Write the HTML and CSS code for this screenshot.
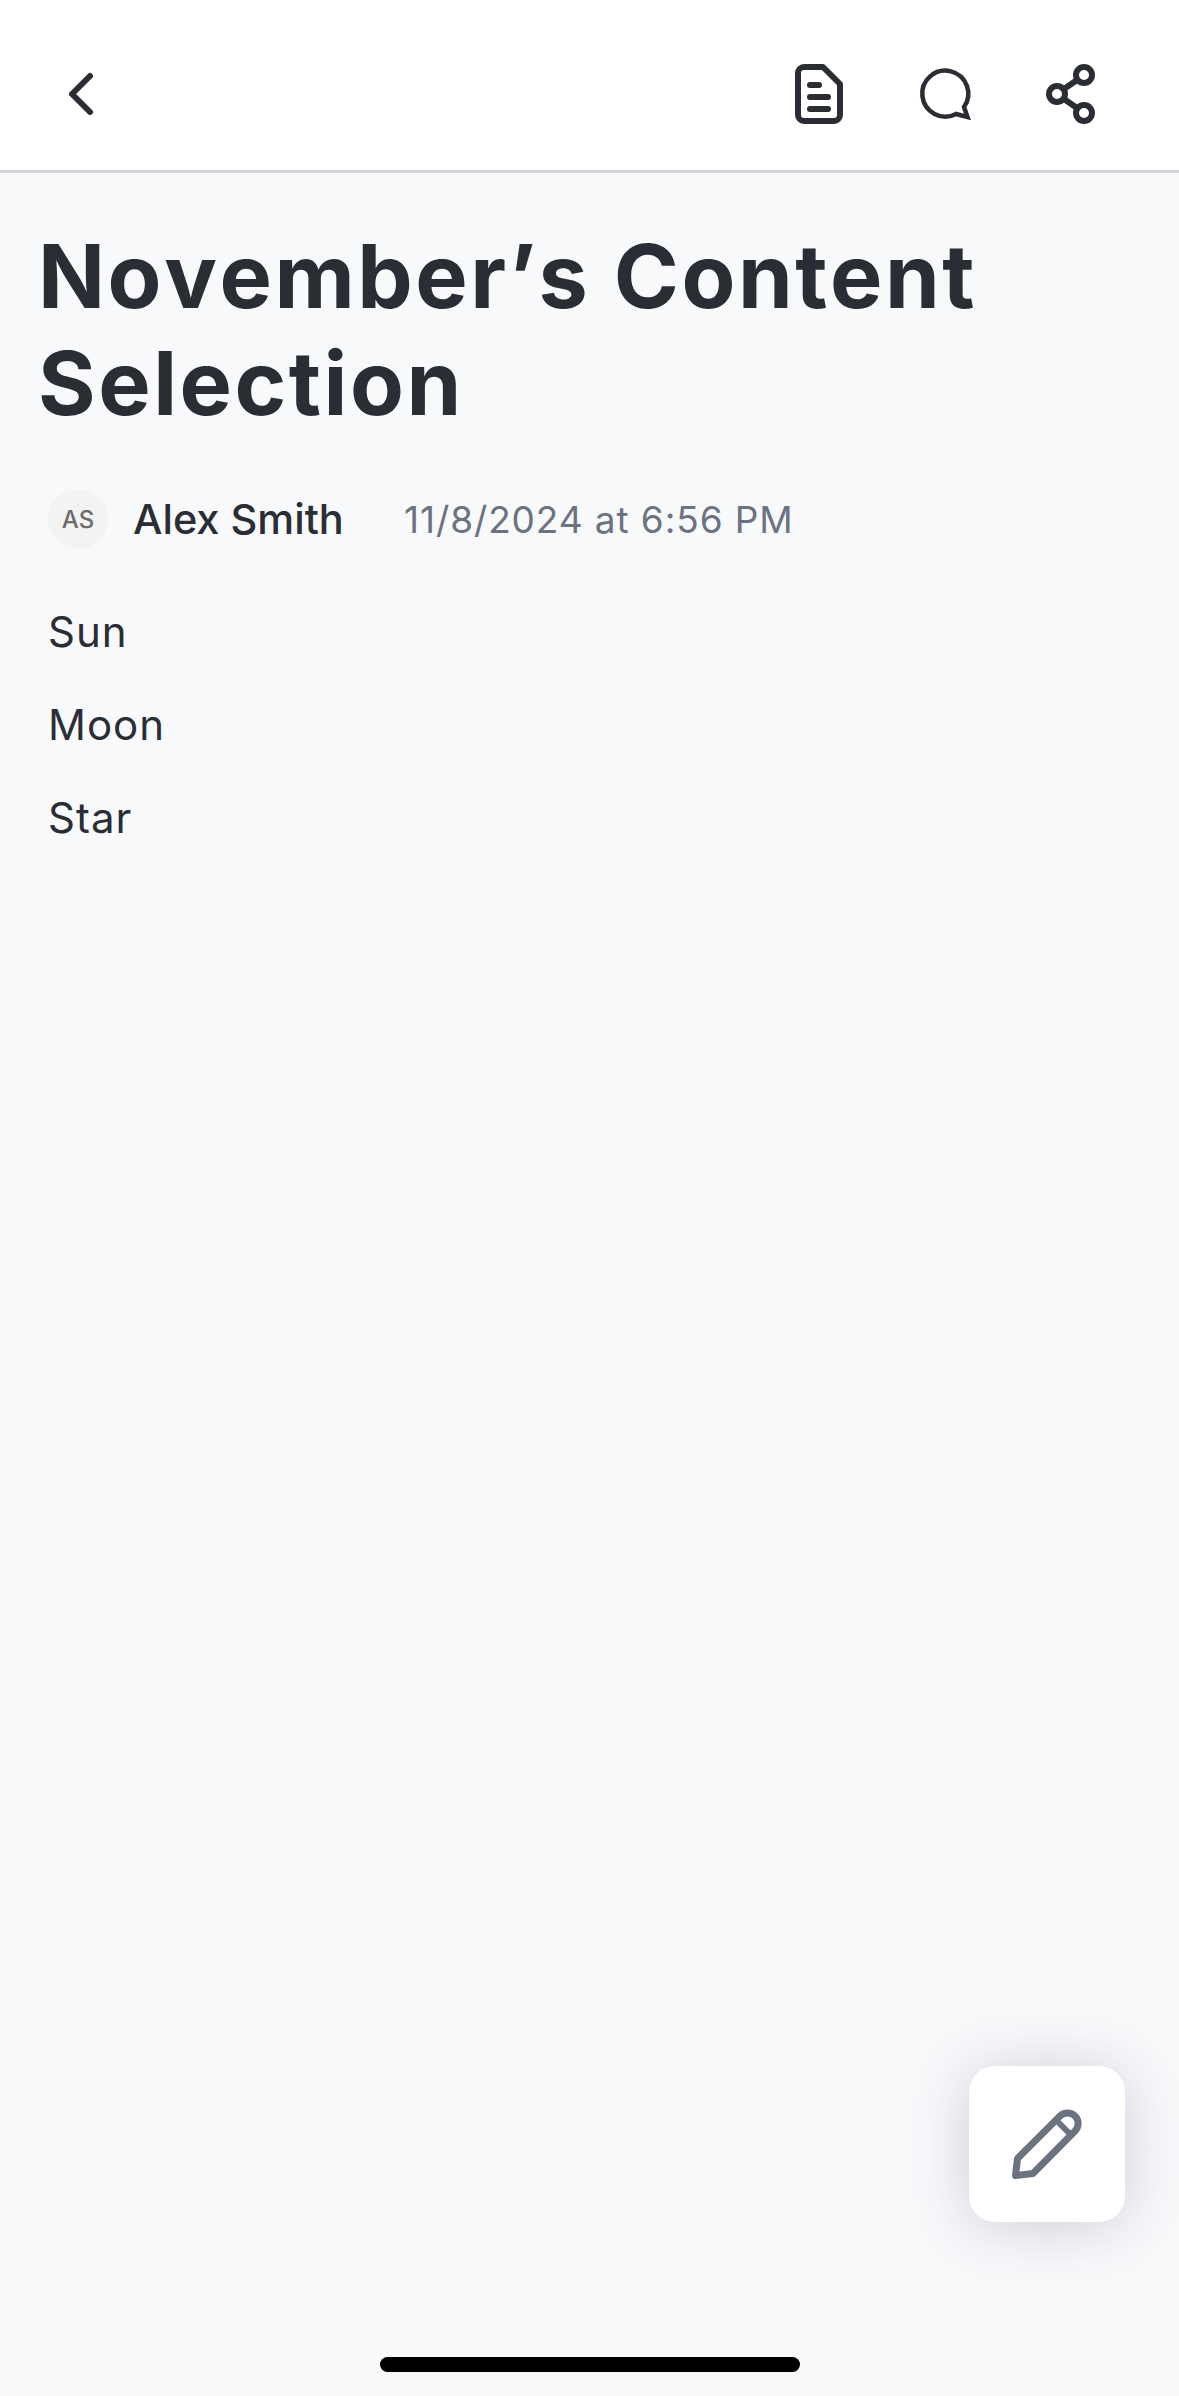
FILE: index.html
```html
<!DOCTYPE html>
<html lang="en">
<head>
  <meta charset="UTF-8">
  <meta name="viewport" content="width=device-width, initial-scale=1.0">
  <title>November's Content Selection</title>
  <link rel="stylesheet" href="styles.css">
</head>
<body>
  <div id="page">
    <header class="top-bar">
      <button class="icon-button" aria-label="Back">
        <svg width="60" height="60" viewBox="0 0 60 60" fill="none" stroke="#2a2d34" stroke-width="6" stroke-linecap="round" stroke-linejoin="round">
          <path d="M39 12L21 30L39 48"/>
        </svg>
      </button>
      <div class="top-actions">
        <button class="icon-button" aria-label="Document">
          <svg width="60" height="60" viewBox="0 0 60 60" fill="none" stroke="#2a2d34" stroke-width="6" stroke-linecap="round" stroke-linejoin="round">
            <path d="M15 3H34L51 20V51a6 6 0 0 1-6 6H15a6 6 0 0 1-6-6V9a6 6 0 0 1 6-6Z"/>
            <path d="M21 21H30M21 33H39M21 45H39"/>
          </svg>
        </button>
        <button class="icon-button" aria-label="Comments">
          <svg width="60" height="60" viewBox="0 0 60 60" fill="none" stroke="#2a2d34" stroke-width="4.5" stroke-linejoin="miter">
            <path d="M41 50A23 23 0 1 1 49 43L52.5 53Z"/>
          </svg>
        </button>
        <button class="icon-button" aria-label="Share">
          <svg width="60" height="60" viewBox="0 0 60 60" fill="none" stroke="#2a2d34" stroke-width="6">
            <circle cx="43" cy="11" r="8"/>
            <circle cx="16" cy="30" r="8"/>
            <circle cx="43" cy="49" r="8"/>
            <path d="M23 25L36 16M23 35L36 44"/>
          </svg>
        </button>
      </div>
    </header>

    <main class="note">
      <h1 class="note-title">November’s Content Selection</h1>
      <div class="note-meta">
        <span class="avatar">AS</span>
        <span class="author">Alex Smith</span>
        <span class="timestamp">11/8/2024 at 6:56 PM</span>
      </div>
      <div class="note-body">
        <p>Sun</p>
        <p>Moon</p>
        <p>Star</p>
      </div>
    </main>

    <button class="edit-button" aria-label="Edit">
      <svg width="72" height="72" viewBox="0 0 72 72" fill="none" stroke="#6b7280" stroke-width="7" stroke-linecap="round" stroke-linejoin="round">
        <path d="M49 8A10.5 10.5 0 0 1 64 23L22 65.5L4.5 67.5L6.5 50.5Z"/>
        <path d="M45 12L60 27" stroke-linecap="butt" stroke-width="6"/>
      </svg>
    </button>

    <div class="home-bar"></div>
  </div>
</body>
</html>
```

FILE: styles.css
```css
* {
  box-sizing: border-box;
}
body {
  margin: 0;
  font-family: Inter, "Noto Sans", sans-serif;
  background-color: #f8f9fb;
  color: #2a2d34;
}
#page {
  position: relative;
  width: 1179px;
  height: 2396px;
  overflow: hidden;
}
button {
  border: none;
  background: none;
  padding: 0;
  margin: 0;
  cursor: pointer;
}
.icon-button {
  display: block;
  width: 60px;
  height: 60px;
}
.icon-button svg {
  display: block;
}
.top-bar {
  display: flex;
  justify-content: space-between;
  align-items: center;
  height: 173px;
  padding: 17px 78px 0 51px;
  background-color: #fff;
  border-bottom: 3px solid #d4d5dc;
}
.top-actions {
  display: flex;
  gap: 66px;
}
.note {
  padding: 50px 38px 0;
}
.note-title {
  margin: 0;
  font-size: 88px;
  line-height: 107px;
  font-weight: 700;
  letter-spacing: 2.55px;
  font-kerning: none;
}
.note-meta {
  display: flex;
  align-items: center;
  margin-top: 52px;
  padding-left: 10px;
}
.avatar {
  display: flex;
  justify-content: center;
  align-items: center;
  width: 60px;
  height: 60px;
  margin-right: 25px;
  border-radius: 50%;
  background-color: #f3f3f3;
  color: #6b6b6b;
  font-size: 24px;
  font-weight: 500;
}
.author {
  width: 271px;
  font-size: 41.5px;
  font-weight: 500;
}
.timestamp {
  font-size: 37px;
  letter-spacing: 0.9px;
  color: #6b7280;
}
.note-body {
  margin-top: 57px;
  padding-left: 10px;
}
.note-body p {
  margin: 0 0 42px;
  font-size: 42px;
  line-height: 51px;
  letter-spacing: 1px;
}
.edit-button {
  position: absolute;
  left: 969px;
  top: 2066px;
  display: flex;
  justify-content: center;
  align-items: center;
  width: 156px;
  height: 156px;
  border-radius: 26px;
  background-color: #fff;
  box-shadow: 0 4px 60px rgba(50, 60, 80, 0.22);
}
.home-bar {
  position: absolute;
  left: 380px;
  top: 2357px;
  width: 420px;
  height: 15px;
  border-radius: 8px;
  background-color: #000;
}
```
